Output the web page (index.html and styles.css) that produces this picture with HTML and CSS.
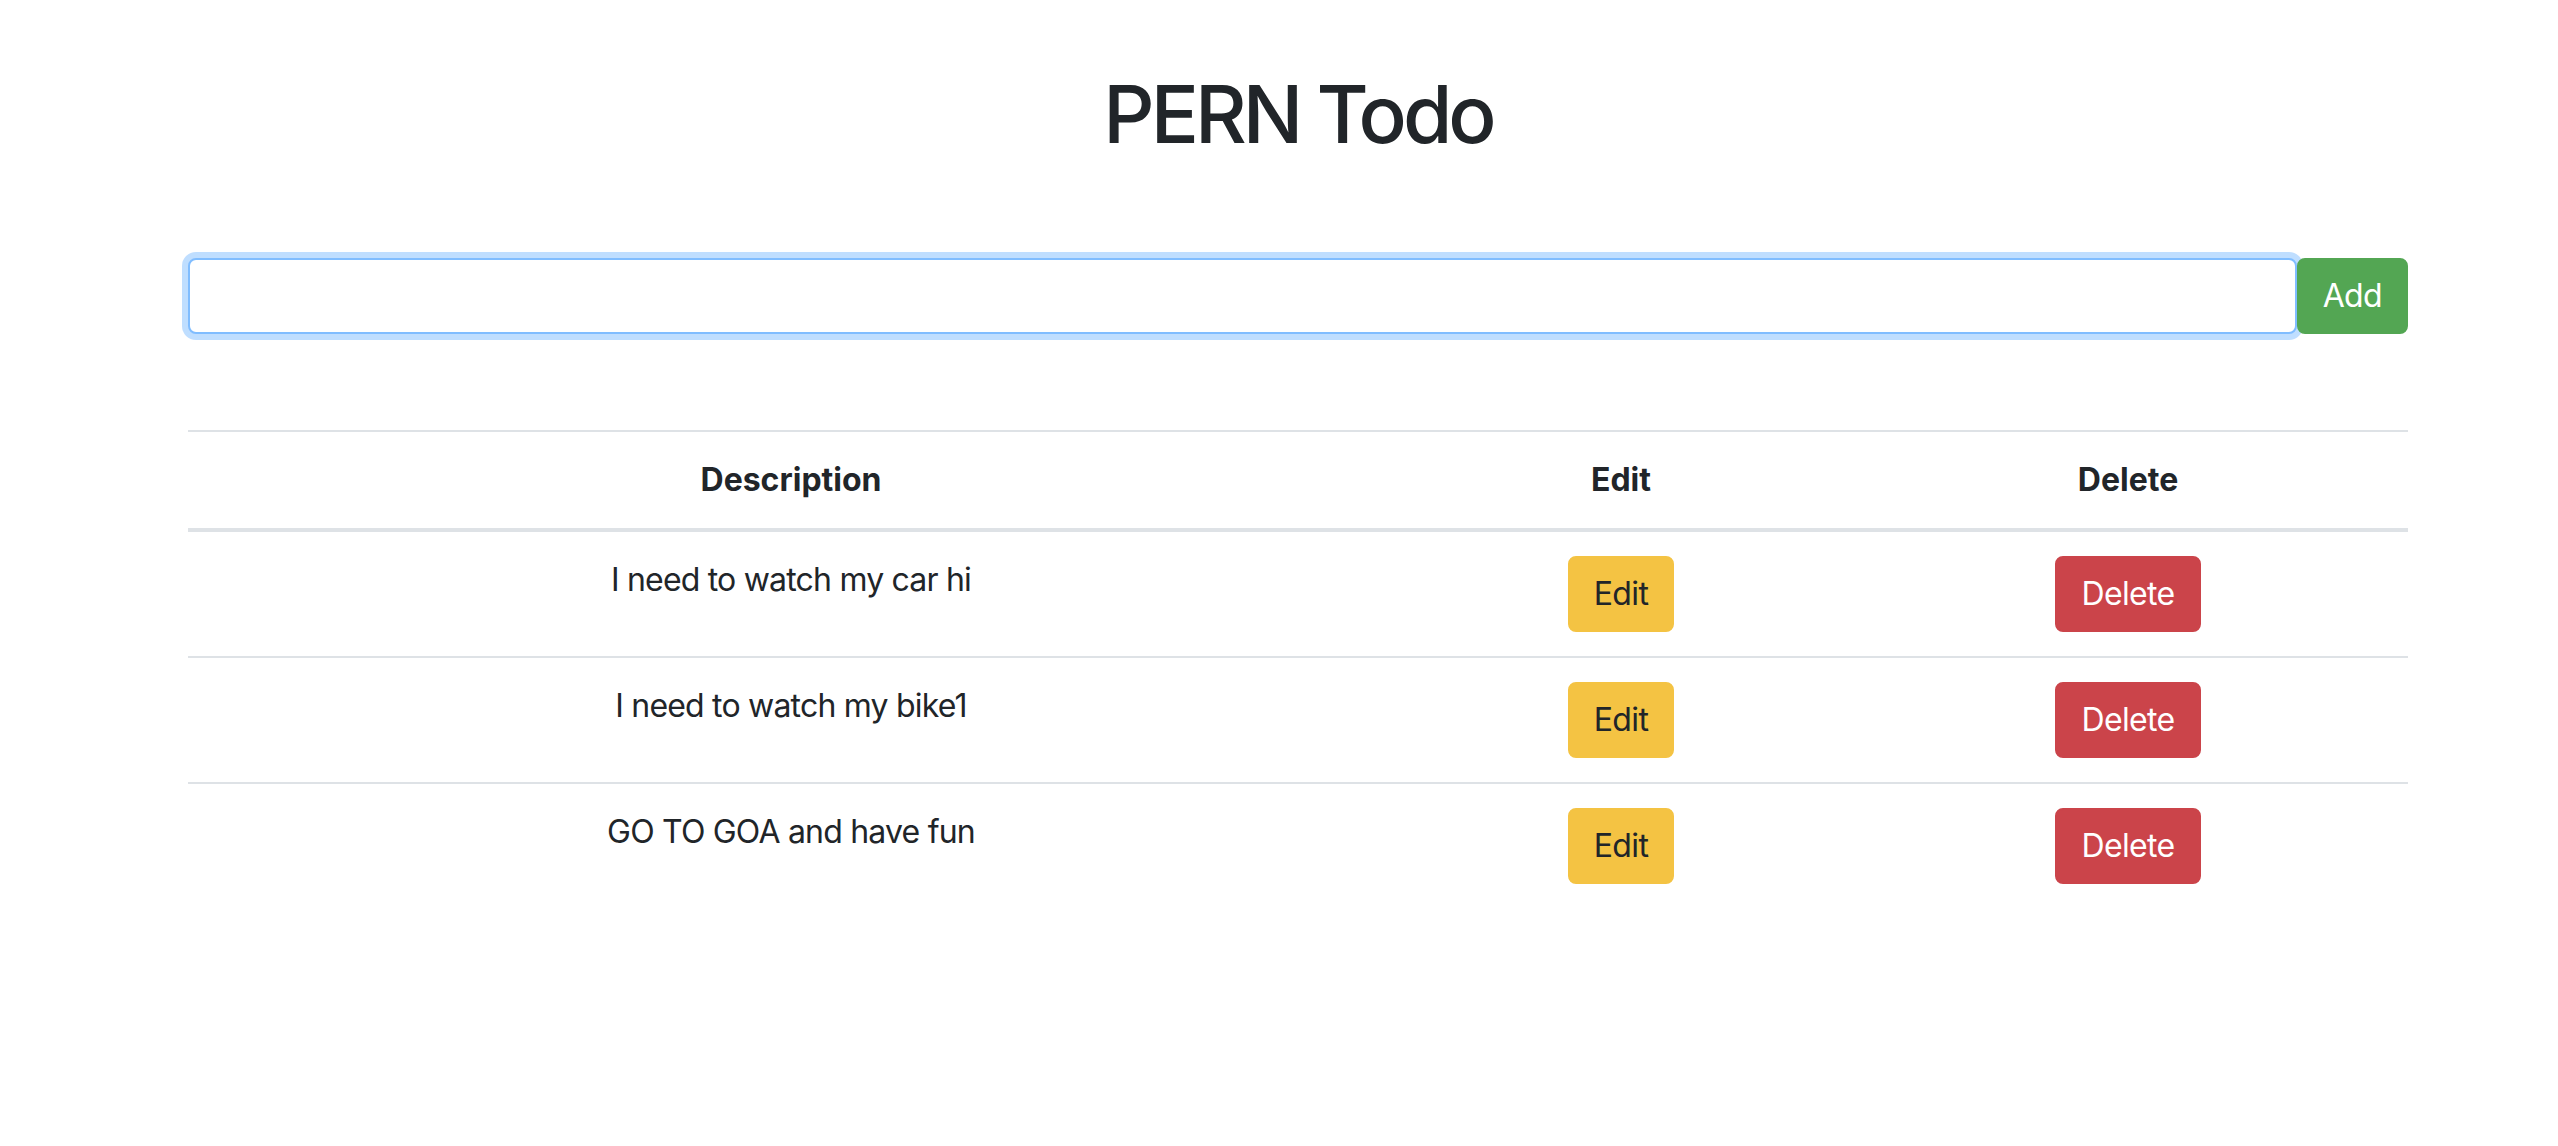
FILE: index.html
```html
<!DOCTYPE html>
<html lang="en">
<head>
<meta charset="utf-8">
<title>PERN Todo</title>
<link rel="stylesheet" href="styles.css">
</head>
<body>
<div class="container">
  <h1 class="title">PERN Todo</h1>
  <form class="add-form">
    <input class="form-control" type="text">
    <button class="btn btn-success" type="button">Add</button>
  </form>
  <table class="table">
    <thead>
      <tr>
        <th class="col-desc">Description</th>
        <th class="col-edit">Edit</th>
        <th class="col-del">Delete</th>
      </tr>
    </thead>
    <tbody>
      <tr>
        <td>I need to watch my car hi</td>
        <td><button class="btn btn-warning" type="button">Edit</button></td>
        <td><button class="btn btn-danger" type="button">Delete</button></td>
      </tr>
      <tr>
        <td>I need to watch my bike1</td>
        <td><button class="btn btn-warning" type="button">Edit</button></td>
        <td><button class="btn btn-danger" type="button">Delete</button></td>
      </tr>
      <tr>
        <td>GO TO GOA and have fun</td>
        <td><button class="btn btn-warning" type="button">Edit</button></td>
        <td><button class="btn btn-danger" type="button">Delete</button></td>
      </tr>
    </tbody>
  </table>
</div>
</body>
</html>
```

FILE: styles.css
```css
* { box-sizing: border-box; }
html, body { margin: 0; padding: 0; background: #fff; }
body {
  font-family: Inter, "Noto Sans", "Liberation Sans", sans-serif;
  font-size: 32px;
  line-height: 48px;
  letter-spacing: -0.025em;
  color: #212529;
}
.container {
  width: 2220px;
  margin-left: 188px;
}
.title {
  margin: 66px 0 16px;
  font-size: 80px;
  line-height: 96px;
  font-weight: 500;
  letter-spacing: -0.05em;
  text-align: center;
}
.add-form {
  display: flex;
  margin-top: 96px;
}
.form-control {
  flex: 1;
  height: 76px;
  padding: 12px 24px;
  font: inherit;
  color: #495057;
  border: 2px solid #80bdff;
  border-radius: 8px;
  box-shadow: 0 0 0 6px rgba(0, 123, 255, 0.25);
  outline: none;
  background: #fff;
}
.btn {
  display: inline-block;
  height: 76px;
  padding: 12px 24px;
  font: inherit;
  line-height: 48px;
  letter-spacing: -0.02em;
  border: 2px solid transparent;
  border-radius: 8px;
  cursor: pointer;
}
.btn-success { background: #53a653; border-color: #53a653; color: #fff; }
.btn-warning { background: #f4c343; border-color: #f4c343; color: #212529; }
.btn-danger { background: #cb444a; border-color: #cb444a; color: #fff; }
.table {
  width: 100%;
  margin-top: 96px;
  border-collapse: collapse;
  text-align: center;
}
.table th, .table td {
  padding: 24px;
  border-top: 2px solid #dee2e6;
  vertical-align: top;
}
.table thead th {
  font-weight: 700;
  letter-spacing: 0;
  border-bottom: 4px solid #dee2e6;
  vertical-align: bottom;
}
.col-desc { width: 1206px; }
.col-edit { width: 454px; }
.col-del { width: 560px; }
```
